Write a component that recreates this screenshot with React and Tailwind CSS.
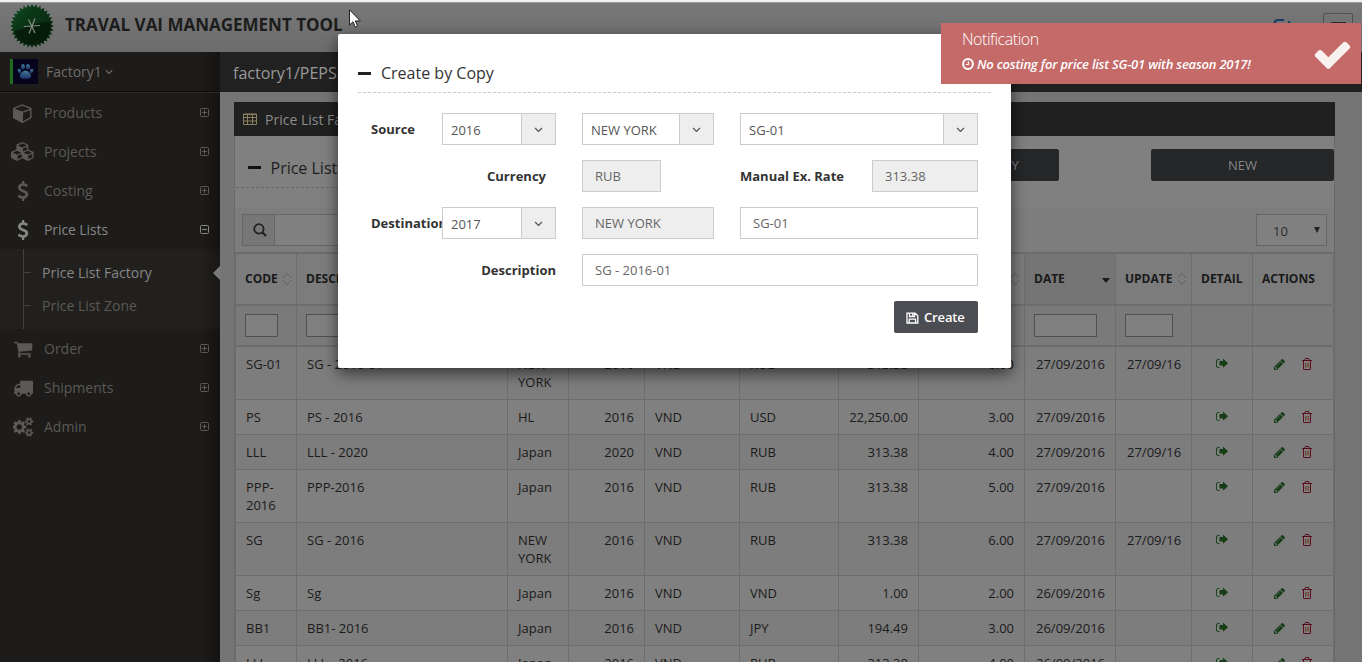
import React from "react";

const P = {
  cube: ["0 0 1792 1792", "M896 1629l640-349v-636l-640 233v752zm-64-865l698-254-698-254-698 254zm832-252v768q0 35-18 65t-49 47l-704 384q-28 16-61 16t-61-16l-704-384q-31-17-49-47t-18-65v-768q0-40 23-73t61-47l704-256q22-8 44-8t44 8l704 256q38 14 61 47t23 73z"],
  cubes: ["0 0 2304 1792", "M640 1632l384-192v-314l-384 164v342zm-64-454l404-173-404-173-404 173zm1088 454l384-192v-314l-384 164v342zm-64-454l404-173-404-173-404 173zm-448-293l384-165v-266l-384 164v267zm-64-379l441-189-441-189-441 189zm1088 518v416q0 36-19 67t-52 47l-448 224q-25 14-57 14t-57-14l-448-224q-4-2-7-4-2 2-7 4l-448 224q-25 14-57 14t-57-14l-448-224q-33-16-52-47t-19-67v-416q0-38 21.500-70t56.500-48l434-186v-400q0-38 21.500-70t56.500-48l448-192q23-10 50-10t50 10l448 192q35 16 56.500 48t21.500 70v400l434 186q36 16 57 48t21 70z"],
  dollar: ["0 0 1792 1792", "M1362 1185q0 153-99.500 263.500t-258.500 136.500v175q0 14-9 23t-23 9h-135q-13 0-22.500-9.500t-9.500-22.500v-175q-66-9-127.500-31t-101.500-44.500-74-48-46.500-37.500-17.500-18q-17-21-2-41l103-135q7-10 23-12 15-2 24 9l2 2q113 99 243 125 37 8 74 8 81 0 142.500-43t61.500-122q0-28-15-53t-33.500-42-58.500-37.500-66-32-80-32.500q-39-16-61.500-25t-61.500-26.500-62.500-31-56.500-35.500-53.500-42.500-43.500-49-35.500-58-21-66.500-8.500-78q0-138 98-242t255-134v-180q0-13 9.500-22.500t22.500-9.500h135q14 0 23 9t9 23v176q57 6 110.500 23t87 33.500 63.500 37.500 39 29 15 14q17 18 5 38l-81 146q-8 15-23 16-14 3-27-7-3-3-14.500-12t-39-26.500-58.500-32-74.500-26-85.500-11.500q-95 0-155 43t-60 111q0 26 8.500 48t29.500 41.500 39.500 33 56 31 60.500 27 70 27.500q53 20 81 31.500t76 35 75.500 42.500 62 50 53 63.500 31.500 76.500 13 94z"],
  cart: ["0 0 1792 1792", "M704 1536q0 52-38 90t-90 38-90-38-38-90 38-90 90-38 90 38 38 90zm896 0q0 52-38 90t-90 38-90-38-38-90 38-90 90-38 90 38 38 90zm128-1088v512q0 24-16.500 42.500t-40.500 21.500l-1044 122q13 60 13 70 0 16-24 64h920q26 0 45 19t19 45-19 45-45 19h-1024q-26 0-45-19t-19-45q0-11 8-31.500t16-36 21.500-40 15.500-29.500l-177-823h-204q-26 0-45-19t-19-45 19-45 45-19h256q16 0 28.500 6.500t19.500 15.500 13 24.500 8 26 5.500 29.500 4.500 26h1201q26 0 45 19t19 45z"],
  truck: ["0 0 1792 1792", "M640 1408q0-52-38-90t-90-38-90 38-38 90 38 90 90 38 90-38 38-90zm-384-512h384v-256h-158q-13 0-22 9l-195 195q-9 9-9 22v30zm1280 512q0-52-38-90t-90-38-90 38-38 90 38 90 90 38 90-38 38-90zm256-1088v1024q0 15-4 26.500t-13.500 18.500-16.500 11.500-23.500 6-22.500 2-25.500 0-22.500-.5q0 106-75 181t-181 75-181-75-75-181h-384q0 106-75 181t-181 75-181-75-75-181h-64q-3 0-22.500.5t-25.500 0-22.500-2-23.500-6-16.500-11.500-13.500-18.500-4-26.500q0-26 19-45t45-19v-320q0-8-.5-35t0-38 2.500-34.500 6.500-37 14-30.500 22.500-30l198-198q19-19 50.500-32t58.500-13h160v-192q0-26 19-45t45-19h1024q26 0 45 19t19 45z"],
  cogs: ["0 0 1920 1792", "M832 896q0-106-75-181t-181-75-181 75-75 181 75 181 181 75 181-75 75-181zm768 512q0-52-38-90t-90-38-90 38-38 90q0 53 37.500 90.500t90.500 37.500 90.500-37.500 37.500-90.500zm0-1024q0-52-38-90t-90-38-90 38-38 90q0 53 37.500 90.500t90.500 37.500 90.500-37.500 37.500-90.500zm-384 421v185q0 10-7 19.500t-16 10.500l-155 24q-11 35-32 76 34 48 90 115 7 11 7 20 0 12-7 19-23 30-82.500 89.500t-78.500 59.500q-11 0-21-7l-115-90q-37 19-77 31-11 108-23 155-7 24-30 24h-186q-11 0-20-7.500t-10-17.500l-23-153q-34-10-75-31l-118 89q-7 7-20 7-11 0-21-8-144-133-144-160 0-9 7-19 10-14 41-53t47-61q-23-44-35-82l-152-24q-10-1-17-9.500t-7-19.500v-185q0-10 7-19.500t16-10.500l155-24q11-35 32-76-34-48-90-115-7-11-7-20 0-12 7-20 22-30 82-89t79-59q11 0 21 7l115 90q34-18 77-32 11-108 23-154 7-24 30-24h186q11 0 20 7.500t10 17.500l23 153q34 10 75 31l118-89q8-7 20-7 11 0 21 8 144 133 144 160 0 8-7 19-12 16-42 54t-45 60q23 48 34 82l152 23q10 2 17 10.500t7 19.500zm640 533v140q0 16-149 31-12 27-30 52 51 113 51 138 0 4-4 7-122 71-124 71-8 0-46-47t-52-68q-20 2-30 2t-30-2q-14 21-52 68t-46 47q-2 0-124-71-4-3-4-7 0-25 51-138-18-25-30-52-149-15-149-31v-140q0-16 149-31 13-29 30-52-51-113-51-138 0-4 4-7 4-2 35-20t59-34 30-16q8 0 46 46.500t52 67.500q20-2 30-2t30 2q51-71 92-112l6-2q4 0 124 70 4 3 4 7 0 25-51 138 17 23 30 52 149 15 149 31zm0-1024v140q0 16-149 31-12 27-30 52 51 113 51 138 0 4-4 7-122 71-124 71-8 0-46-47t-52-68q-20 2-30 2t-30-2q-14 21-52 68t-46 47q-2 0-124-71-4-3-4-7 0-25 51-138-18-25-30-52-149-15-149-31v-140q0-16 149-31 13-29 30-52-51-113-51-138 0-4 4-7 4-2 35-20t59-34 30-16q8 0 46 46.500t52 67.500q20-2 30-2t30 2q51-71 92-112l6-2q4 0 124 70 4 3 4 7 0 25-51 138 17 23 30 52 149 15 149 31z"],
  check: ["0 0 1792 1792", "M1671 566q0 40-28 68l-724 724-136 136q-28 28-68 28t-68-28l-136-136-362-362q-28-28-28-68t28-68l136-136q28-28 68-28t68 28l294 295 656-657q28-28 68-28t68 28l136 136q28 28 28 68z"],
  pencil: ["0 0 1792 1792", "M491 1536l91-91-235-235-91 91v107h128v128h107zm523-928q0-22-22-22-10 0-17 7l-542 542q-7 7-7 17 0 22 22 22 10 0 17-7l542-542q7-7 7-17zm-54-192l416 416-832 832h-416v-416zm683 96q0 53-37 90l-166 166-416-416 166-165q36-38 90-38 53 0 91 38l235 234q37 39 37 91z"],
};

function Glyph({ name, className }) {
  return (
    <svg viewBox={P[name][0]} className={className} fill="currentColor">
      <path d={P[name][1]} />
    </svg>
  );
}

const Logo = () => {
  const pts = [];
  for (let i = 0; i < 64; i++) {
    const r = i % 2 ? 18.8 : 22;
    const a = (i * Math.PI) / 32;
    pts.push(`${(22 + r * Math.cos(a)).toFixed(2)},${(22 + r * Math.sin(a)).toFixed(2)}`);
  }
  return (
    <svg viewBox="0 0 44 44" className="mb-[3px] h-11 w-11 shrink-0">
      <defs>
        <linearGradient id="seal" x1="0" y1="0" x2="1" y2="1">
          <stop offset="0" stopColor="#12582a" />
          <stop offset="0.3" stopColor="#0a3816" />
          <stop offset="0.55" stopColor="#0a3015" />
          <stop offset="1" stopColor="#08260e" />
        </linearGradient>
      </defs>
      <polygon points={pts.join(" ")} fill="url(#seal)" />
      <path d="M4 27C12 27 22 18 40 18A18.500 18.500 0 0 1 4 27z" fill="#041606" opacity=".7" />
      <path d="M14 22.500L30 21.500M18.500 15.500L25 29M25 14.500L19 29.500" stroke="#858d85" strokeWidth="1.200" fill="none" />
    </svg>
  );
};

const Paw = () => (
  <svg viewBox="0 0 25 25" className="h-[25px] w-[25px]">
    <defs>
      <linearGradient id="paw" x1="0" y1="0" x2="0" y2="1">
        <stop offset="0" stopColor="#3f7f94" />
        <stop offset="1" stopColor="#20306e" />
      </linearGradient>
    </defs>
    <rect width="25" height="25" fill="#06031c" />
    <g fill="url(#paw)">
      <path d="M12.500 11.500c2.500 0 5.500 3.300 5.500 5.700 0 2.300-2.500 2.500-5.500 2.500S7 19.500 7 17.200c0-2.400 3-5.700 5.500-5.700z" />
      <ellipse cx="10" cy="7.800" rx="2" ry="2.700" />
      <ellipse cx="15" cy="7.800" rx="2" ry="2.700" />
      <ellipse cx="6.500" cy="12" rx="1.700" ry="2.300" transform="rotate(-20 6.500 12)" />
      <ellipse cx="18.500" cy="12" rx="1.700" ry="2.300" transform="rotate(20 18.500 12)" />
    </g>
  </svg>
);

const BoxToggle = ({ minus }) => (
  <svg viewBox="0 0 9 9" className="h-[9px] w-[9px]" fill="none" stroke="currentColor">
    <rect x=".5" y=".5" width="8" height="8" rx="1" />
    <path d={minus ? "M2 4.500h5" : "M2 4.500h5M4.500 2v5"} />
  </svg>
);

const Chevron = ({ className }) => (
  <svg viewBox="0 0 10 7" className={className} fill="none" stroke="currentColor" strokeWidth="1.500">
    <path d="M1 1.200L5 5.200L9 1.200" />
  </svg>
);

function NavItem({ icon, iconClass, label, active }) {
  return (
    <div className={`flex h-[39px] items-center pr-[11px] ${active ? "text-[#868685]" : "text-[#5b5955]"}`}>
      <div className="flex w-[44px] justify-center pl-[2px]">
        <Glyph name={icon} className={iconClass} />
      </div>
      <span className={`flex-1 text-[14px] ${active ? "tracking-[-0.1px]" : ""}`}>{label}</span>
      <BoxToggle minus={active} />
    </div>
  );
}

function Sidebar() {
  return (
    <aside className="flex w-[220px] shrink-0 flex-col bg-[#1d1c1a] bg-[linear-gradient(to_right,transparent_200px,#141312)]">
      <div className="flex h-[40px] items-center border-b border-[#0c0b0b] pl-[10px] text-[#706e6b]">
        <div className="h-[25px] w-[3px] bg-[#1f6b1f]" />
        <Paw />
        <span className="ml-2 text-[14px]">Factory1</span>
        <Chevron className="ml-[3px] h-[6px] w-[8px]" />
      </div>
      <nav className="border-t border-[#2b2a28]">
        <NavItem icon="cube" iconClass="h-[20px] w-[20px]" label="Products" />
        <NavItem icon="cubes" iconClass="h-[19px] w-[24px]" label="Projects" />
        <NavItem icon="dollar" iconClass="h-[20px] w-[20px]" label="Costing" />
        <NavItem icon="dollar" iconClass="h-[20px] w-[20px]" label="Price Lists" active />
        <div className="relative flex h-[80px] flex-col bg-[#21201e] bg-[linear-gradient(to_right,transparent_200px,#181716)] pt-[7px]">
          <div className="absolute left-[23px] top-0 h-[80px] w-px bg-[#41403e]" />
          {["Price List Factory", "Price List Zone"].map((t, i) => (
            <div key={t} className={`flex h-[33px] items-center pl-[24px] text-[14px] ${i ? "text-[#5b5955]" : "text-[#868685]"}`}>
              <div className="mr-[11px] h-px w-[7px] bg-[#41403e]" />
              {t}
            </div>
          ))}
          <svg viewBox="0 0 7 14" className="absolute right-0 top-[17px] h-[14px] w-[7px]"><path d="M7 0v14L0 7z" fill="#7a7a7a" /></svg>
        </div>
        <NavItem icon="cart" iconClass="h-[20px] w-[20px]" label="Order" />
        <NavItem icon="truck" iconClass="h-[20px] w-[20px]" label="Shipments" />
        <NavItem icon="cogs" iconClass="h-[20px] w-[21px]" label="Admin" />
      </nav>
    </aside>
  );
}

const COLS = "grid grid-cols-[61px_211px_61px_76px_95px_99px_80px_106px_91px_76px_61px_81px]";

const SortIcon = () => (
  <svg viewBox="0 0 10 14" className="h-[14px] w-[10px]" fill="none" stroke="#5e5e5e" strokeWidth=".9">
    <path d="M.8 6L5 1.300L9.200 6M.8 8L5 12.700L9.200 8" />
  </svg>
);

const HEADS = ["CODE", "DESCRIPTION", "ZONE", "YEAR", "LOCAL", "CURRENCY", "RATE", "FACTOR", "DATE", "UPDATE", "DETAIL", "ACTIONS"];
const FILTERS = ["w-[33px]", "w-[180px]", "w-[33px]", "w-[48px]", "w-[67px]", "w-[71px]", "w-[52px]", "w-[78px]", "w-[63px]", "w-[48px]", "", ""];

const ROWS = [
  ["SG-01", "SG - 2016-01", "NEW YORK", "2016", "VND", "RUB", "313.38", "6.00", "27/09/2016", "27/09/16", 53],
  ["PS", "PS - 2016", "HL", "2016", "VND", "USD", "22,250.00", "3.00", "27/09/2016", "", 35],
  ["LLL", "LLL - 2020", "Japan", "2020", "VND", "RUB", "313.38", "4.00", "27/09/2016", "27/09/16", 35],
  ["PPP-2016", "PPP-2016", "Japan", "2016", "VND", "RUB", "313.38", "5.00", "27/09/2016", "", 53],
  ["SG", "SG - 2016", "NEW YORK", "2016", "VND", "RUB", "313.38", "6.00", "27/09/2016", "27/09/16", 53],
  ["Sg", "Sg", "Japan", "2016", "VND", "VND", "1.00", "2.00", "26/09/2016", "", 35],
  ["BB1", "BB1- 2016", "Japan", "2016", "VND", "JPY", "194.49", "3.00", "26/09/2016", "", 35],
  ["LLL", "LLL - 2016", "Japan", "2016", "VND", "RUB", "313.38", "4.00", "26/09/2016", "", 35],
];

const Share = () => (
  <svg viewBox="0 0 12 11" className="h-[11px] w-[12px]">
    <path d="M3.500 1.500H2Q.5 1.500.5 3V8Q.5 9.500 2 9.500H3.500" fill="none" stroke="#1c451f" />
    <path d="M3.500 3H7V.5L12 5.200L7 9.700V7.500H3.500z" fill="#153d18" />
  </svg>
);

const Trash = () => (
  <svg viewBox="0 0 10 12" className="h-[12px] w-[10px]" fill="none" stroke="#5c0c1c">
    <path d="M0 2.500h10M3 2.500V1Q3 .5 3.500 .5h3q.5 0 .5.5v1.500M1.500 3v8q0 .5.5.5h6q.5 0 .5-.5V3" />
    <path d="M3.500 5v4.500M5 5v4.500M6.500 5v4.500" strokeWidth=".8" stroke="#6d3f28" />
  </svg>
);

function Table() {
  return (
    <div className="w-[1098px] border-l border-[#6d6d6d] text-[13px]">
      <div className={`${COLS} h-[53px] border-b-2 border-t border-[#6d6d6d] bg-[#7c7c7c] text-[12px] font-bold text-[#191919]`}>
        {HEADS.map((h, i) => (
          <div key={h} className={`flex items-center justify-between overflow-hidden border-r border-[#6d6d6d] pb-px pl-[9px] pr-[4px] ${i === 8 ? "bg-[#757575]" : ""}`}>
            <span>{h}</span>
            {i === 8 ? (
              <svg viewBox="0 0 10 6" className="mt-[4px] h-[5px] w-[10px]"><path d="M0 0h10L5 6z" fill="#1b1b1b" /></svg>
            ) : i < 10 ? <SortIcon /> : null}
          </div>
        ))}
      </div>
      <div className={`${COLS} h-[41px] border-b-2 border-[#6d6d6d] bg-[#7a7a7a]`}>
        {FILTERS.map((f, i) => (
          <div key={i} className="flex items-center border-r border-[#6d6d6d] pl-[9px]">
            {f && <div className={`h-[23px] ${f} border border-[#505050] bg-[#808080]`} />}
          </div>
        ))}
      </div>
      {ROWS.map((r, n) => (
        <div key={n} className={`${COLS} border-b border-[#6d6d6d] leading-[18px] text-[#1b1b1b] ${r[10] === 53 ? "h-[53px]" : "h-[35px]"} ${n % 2 ? "bg-[#808080]" : "bg-[#7d7d7d]"}`}>
          {r.slice(0, 10).map((c, i) => (
            <div key={i} className={`overflow-hidden border-r border-[#6d6d6d] px-[10px] pt-[8px] ${i === 3 || i === 6 || i === 7 ? "text-right" : ""} ${i === 8 || i === 9 ? "whitespace-nowrap pl-[11px] pr-0" : ""}`}>{c}</div>
          ))}
          <div className="flex justify-center border-r border-[#6d6d6d] pt-[11px]"><Share /></div>
          <div className="flex gap-[16px] border-r border-[#6d6d6d] pl-[20px] pt-[11px] text-[#153d18]">
            <Glyph name="pencil" className="h-[13px] w-[13px]" />
            <Trash />
          </div>
        </div>
      ))}
    </div>
  );
}

function Panel() {
  return (
    <div className="ml-[14px] mt-[10px] w-[1101px]">
      <div className="flex h-[34px] items-center bg-[#202020] pl-[9px] text-[14px] text-[#8c8c8c]">
        <svg viewBox="0 0 14 12" className="mr-[8px] h-[12px] w-[14px]" fill="none" stroke="#8a8160"><path d="M.5 1h13v10.500H.5zM.5 1.500h13M.5 4.500h13M.5 8h13M4.500 1v10.500M9.500 1v10.500" /></svg>
        Price List Factory
      </div>
      <div className="border-x border-[#696969] bg-[#808080]">
        <div className="flex h-[72px] items-start">
          <div className="ml-[1px] flex h-[52px] w-[640px] items-center border-b border-dashed border-[#666] pl-[12px] pt-[12px] text-[16px] text-[#1e1e1e]">
            <div className="mr-[9.5px] h-[3px] w-[13px] bg-[#111]" />
            Price List Factory
          </div>
          <div className="ml-[1px] mt-[13px] flex h-[32px] w-[183px] items-center justify-center rounded-[2px] bg-[#262729] pt-[2px] text-[13px] text-[#858585]">CREATE BY COPY</div>
          <div className="ml-[92px] mt-[13px] flex h-[32px] w-[183px] items-center justify-center rounded-[2px] bg-[#262729] pt-[2px] text-[13px] text-[#858585]">NEW</div>
        </div>
        <div className="flex h-[45px] items-center justify-between border-b border-[#6a6a6a] bg-[#7d7d7d] pl-[7px] pr-[7px]">
          <div className="flex h-[32px] w-[240px] border border-[#666]">
            <div className="flex w-[32px] items-center justify-center border-r border-[#666] bg-[#777] pl-[2px]">
              <svg viewBox="0 0 14 14" className="h-[14px] w-[14px]" fill="none" stroke="#222" strokeWidth="1.800"><circle cx="5.900" cy="5.900" r="4.700" /><path d="M9.400 9.400l3.600 3.600" strokeWidth="2.200" /></svg>
            </div>
            <div className="flex-1 bg-[#808080]" />
          </div>
          <div className="flex h-[32px] w-[71px] items-center justify-between border border-[#666] bg-[#808080] pl-[16px] pr-[6px] pt-[3px] text-[13px] text-[#2a2a2a]">
            10
            <svg viewBox="0 0 6 6" className="mb-[4px] h-[6px] w-[6px]"><path d="M0 0h6L3 6z" fill="#222" /></svg>
          </div>
        </div>
        <Table />
      </div>
    </div>
  );
}

const Field = ({ className, children, disabled }) => (
  <div className={`flex h-[32px] items-center border border-[#ccc] pl-[12px] pt-[2px] text-[13px] text-[#666] ${disabled ? "bg-[#eee]" : "bg-white"} ${className}`}>{children}</div>
);

const Select = ({ className, children }) => (
  <div className={`relative flex h-[32px] border border-[#ccc] bg-white text-[13px] text-[#555] ${className}`}>
    <span className="flex flex-1 items-center pl-[8px] pt-[4px]">{children}</span>
    <span className="flex w-[34px] items-center justify-center border-l border-[#ccc] bg-[#eee]">
      <Chevron className="mt-[2px] h-[6px] w-[9px] text-[#555]" />
    </span>
  </div>
);

const Label = ({ className, children }) => (
  <div className={`pt-[2px] text-[13px] font-bold text-[#333] ${className}`}>{children}</div>
);

function Modal() {
  return (
    <div className="absolute left-[338px] top-[34px] h-[334px] w-[673px] rounded-[2px] bg-white pl-[20px] pt-[20px] shadow-[0_5px_15px_rgba(0,0,0,0.6)]">
      <div className="flex h-[39px] w-[633px] items-center border-b border-dashed border-[#ccc] text-[16px] text-[#333]">
        <div className="mr-[10px] h-[3px] w-[13px] bg-[#222]" />
        Create by Copy
      </div>
      <div className="flex flex-col gap-[15px] pl-[13px] pt-[20px]">
        <div className="flex items-center">
          <Label className="w-[71px]">Source</Label>
          <Select className="w-[114px]">2016</Select>
          <Select className="ml-[26px] w-[132px]">NEW YORK</Select>
          <Select className="ml-[26px] w-[238px]">SG-01</Select>
        </div>
        <div className="flex items-center">
          <Label className="w-[175px] text-right">Currency</Label>
          <Field disabled className="ml-[36px] w-[79px]">RUB</Field>
          <Label className="ml-[79px] w-[132px]">Manual Ex. Rate</Label>
          <Field disabled className="w-[106px]">313.38</Field>
        </div>
        <div className="flex items-center">
          <Label className="w-[71px] overflow-hidden whitespace-nowrap">Destination</Label>
          <Select className="w-[114px]">2017</Select>
          <Field disabled className="ml-[26px] w-[132px]">NEW YORK</Field>
          <Field className="ml-[26px] w-[238px]">SG-01</Field>
        </div>
        <div className="flex items-center">
          <Label className="w-[185px] text-right">Description</Label>
          <Field className="ml-[26px] w-[396px]">SG - 2016-01</Field>
        </div>
        <div className="flex w-[607px] justify-end">
          <div className="flex h-[32px] w-[84px] items-center rounded-[2px] bg-[#4b4d52] pl-[12px] text-[13px] font-semibold tracking-[-0.15px] text-white">
            <svg viewBox="0 0 13 12" className="mr-[5px] mt-px h-[12px] w-[13px]" fill="none" stroke="#fff" strokeWidth="1.300"><path d="M1 1.200H9.200L11.800 3.800V11H1zM3.200 11V7.200H9.600V11M3.500 1.200V4.500H8.500V1.200M6.800 1.500v2.500" /></svg>
            <span className="pt-[2px]">Create</span>
          </div>
        </div>
      </div>
    </div>
  );
}

function Notification() {
  return (
    <div className="absolute left-[941px] top-[23px] flex h-[61px] w-[420px] items-center justify-between bg-[#c46a69] pl-[21px] pr-[8px] text-white">
      <div className="flex flex-col">
        <div className="mt-[-5px] text-[16px] font-light leading-[22px] tracking-[-0.45px]">Notification</div>
        <div className="mt-[4px] flex items-center text-[13px] font-semibold italic leading-[20px] tracking-[-0.22px]">
          <svg viewBox="0 0 12 12" className="mr-[3px] h-[12px] w-[12px]" fill="none" stroke="#fff"><circle cx="6" cy="6" r="4.900" strokeWidth="2" /><path d="M6.400 3.300V6.500H3.800" strokeWidth="1.200" /></svg>
          No costing for price list SG-01 with season 2017!
        </div>
      </div>
      <Glyph name="check" className="mt-[2px] h-[41px] w-[41px] text-[#f9f0f0]" />
    </div>
  );
}

export default function App() {
  return (
    <div className="relative flex h-[662px] w-[1362px] flex-col overflow-hidden bg-[#757575] font-['Open_Sans','Noto_Sans',sans-serif]">
      <div className="h-[3px] shrink-0 border-b border-[#9b9b9b] bg-[#efefef]" />
      <header className="flex h-[49px] shrink-0 items-center bg-gradient-to-b from-[#787878] to-[#6c6c6c] pl-[10px]">
        <Logo />
        <h1 className="mb-[5px] ml-[11px] flex-1 text-[17px] font-bold text-[#1c1c1c]">TRAVAL VAI MANAGEMENT TOOL</h1>
        <svg viewBox="0 0 22 18" className="mr-[28px] h-[18px] w-[22px]" fill="none" stroke="#1a3c63" strokeWidth="2"><path d="M11 1H5Q1.500 1 1.500 5V13Q1.500 16 5 16H12" /><path d="M8 9h7.500V2L21 7.500L15.500 14V9" fill="#1a3c63" strokeWidth="1" /></svg>
        <div className="mb-[3px] mr-[9px] flex h-[26px] w-[30px] justify-center rounded-[2px] border border-[#505050] pt-[8px]"><div className="h-[2px] w-[15px] bg-[#2b2b2b]" /></div>
      </header>
      <div className="flex min-h-0 flex-1">
        <Sidebar />
        <main className="min-w-0 flex-1 overflow-hidden">
          <div className="flex h-[40px] items-center bg-[#212121] pl-[13px] pt-px text-[16px] text-[#999]">factory1/PEPS</div>
          <Panel />
        </main>
      </div>
      <Modal />
      <Notification />
      <svg viewBox="0 0 12 19" className="absolute left-[349px] top-[9px] h-[19px] w-[12px]"><path d="M.5 .8V16L4 12.700L6.400 18.200L8.600 17.200L6.300 11.900H11.300z" fill="#fff" stroke="#111" strokeWidth=".9" /></svg>
    </div>
  );
}
